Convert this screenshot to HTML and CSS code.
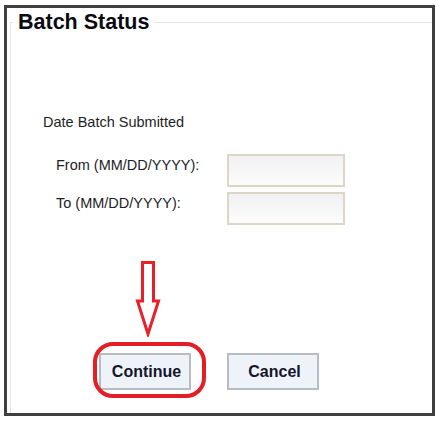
FILE: index.html
```html
<!DOCTYPE html>
<html>
<head>
<meta charset="utf-8">
<link rel="stylesheet" href="styles.css">
</head>
<body>
<div class="frame">
  <fieldset class="panel">
    <legend class="panel-title">Batch Status</legend>
    <div class="section-title">Date Batch Submitted</div>
    <div class="rows">
      <div class="row">
        <label class="row-label">From (MM/DD/YYYY):</label>
        <input class="date-input" type="text">
      </div>
      <div class="row">
        <label class="row-label">To (MM/DD/YYYY):</label>
        <input class="date-input" type="text">
      </div>
    </div>
    <div class="actions">
      <button class="btn">Continue</button>
      <button class="btn">Cancel</button>
    </div>
  </fieldset>
  <svg class="arrow" width="26" height="76" viewBox="0 0 26 76">
    <polygon points="7.5,1.5 18.5,1.5 18.5,40 23.5,40 13,73 2.5,40 7.5,40" fill="#fff" stroke="#e8202a" stroke-width="3" stroke-linejoin="miter"/>
  </svg>
  <div class="highlight"></div>
</div>
</body>
</html>
```

FILE: styles.css
```css
html, body {
  margin: 0;
  padding: 0;
  background: #fff;
}
body {
  padding: 5px 0 0 4px;
  font-family: "Liberation Sans", Arial, sans-serif;
  color: #1e1e26;
}
.frame {
  position: relative;
  box-sizing: border-box;
  width: 431px;
  height: 411px;
  border: 3px solid #3f3f3f;
  overflow: hidden;
}
.panel {
  margin: 2px 0 0 3px;
  padding: 0;
  min-width: 0;
  height: 440px;
  border: none;
  border-top: 1px solid #e6e6e6;
  border-left: 1px solid #e6e6e6;
}
.panel-title {
  margin-left: 2px;
  padding: 0 5px;
  font-size: 21.5px;
  font-weight: bold;
  color: #0a0a10;
}
.section-title {
  margin: 79px 0 0 32px;
  font-size: 14.5px;
}
.rows {
  margin: 24px 0 0 45px;
  display: flex;
  flex-direction: column;
  gap: 5px;
}
.row {
  display: flex;
  align-items: flex-start;
}
.row-label {
  width: 171px;
  padding-top: 3px;
  font-size: 14.5px;
}
.date-input {
  box-sizing: border-box;
  width: 118px;
  height: 33px;
  margin: 0;
  border: 2px solid #ddd6c6;
  background: linear-gradient(#f1f1f3, #fcfcfc);
  outline: none;
}
.actions {
  margin: 128px 0 0 88px;
  display: flex;
  gap: 36px;
}
.btn {
  box-sizing: border-box;
  width: 92px;
  height: 37px;
  margin: 0;
  padding: 0 0 0 3px;
  border: 2px solid #b7bcc3;
  background: #eef3fa;
  font-family: "Liberation Sans", Arial, sans-serif;
  font-size: 16px;
  font-weight: bold;
  color: #16162a;
}
.arrow {
  position: absolute;
  left: 128px;
  top: 253px;
}
.highlight {
  position: absolute;
  left: 86px;
  top: 334px;
  box-sizing: border-box;
  width: 113px;
  height: 56px;
  border: 4px solid #e31e26;
  border-radius: 20px;
}
```
